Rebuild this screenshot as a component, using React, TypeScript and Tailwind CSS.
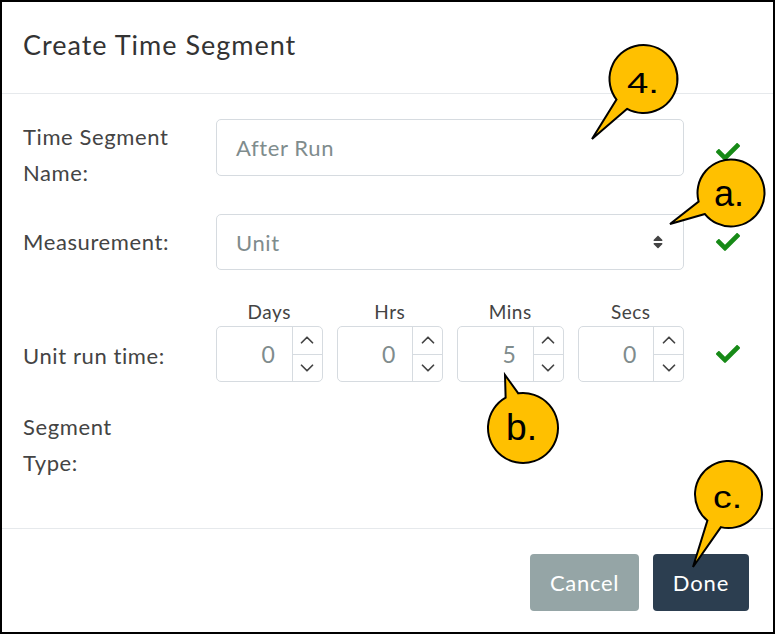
import React from 'react';

const CHECK_PATH =
  'M173.898 439.404l-166.4-166.4c-9.997-9.997-9.997-26.206 0-36.204l36.203-36.204c9.997-9.998 26.207-9.998 36.204 0L192 312.69 432.095 72.596c9.997-9.997 26.207-9.997 36.204 0l36.203 36.204c9.997 9.997 9.997 26.206 0 36.204l-294.4 294.401c-9.998 9.997-26.207 9.997-36.204-.001z';

function Check({ className = '' }: { className?: string }) {
  return (
    <svg viewBox="0 0 512 512" className={`w-[24px] h-[24px] text-[#178a17] ${className}`}>
      <path fill="currentColor" d={CHECK_PATH} />
    </svg>
  );
}

function SortIcon() {
  return (
    <svg viewBox="0 0 320 512" className="w-[10px] h-[16px] text-[#444]">
      <path
        fill="currentColor"
        d="M41 288h238c21.4 0 32.1 25.9 17 41L177 448c-9.4 9.4-24.6 9.4-33.9 0L24 329c-15.1-15.1-4.4-41 17-41zm255-105L177 64c-9.4-9.4-24.6-9.4-33.9 0L24 183c-15.1 15.1-4.4 41 17 41h238c21.4 0 32.1-25.9 17-41z"
      />
    </svg>
  );
}

function Chevron({ up }: { up?: boolean }) {
  return (
    <svg viewBox="0 0 24 24" className="w-[22px] h-[22px]" fill="none" stroke="#444" strokeWidth={1.9} strokeLinecap="round" strokeLinejoin="round">
      <path d={up ? 'M6 15l6-6 6 6' : 'M6 9l6 6 6-6'} />
    </svg>
  );
}

function Spinner({ label, value }: { label: string; value: string }) {
  return (
    <div className="flex flex-col w-[107px]">
      <div className="text-center text-[19px] tracking-[0.5px] leading-[22px] text-[#444] mb-[3px]">{label}</div>
      <div className="flex h-[56px] border border-[#d6dbe0] rounded-[5px] overflow-hidden">
        <div className="flex-1 flex items-center justify-end pr-[16px] text-[23px] text-[#7f8c8d]">{value}</div>
        <div className="w-[30px] border-l border-[#d6dbe0] flex flex-col">
          <div className="flex-1 flex items-center justify-center border-b border-[#d6dbe0]">
            <Chevron up />
          </div>
          <div className="flex-1 flex items-center justify-center">
            <Chevron />
          </div>
        </div>
      </div>
    </div>
  );
}

function calloutPath(cx: number, cy: number, r: number, tx: number, ty: number, half: number) {
  const a = Math.atan2(ty - cy, tx - cx);
  const h = (half * Math.PI) / 180;
  const p1 = [cx + r * Math.cos(a - h), cy + r * Math.sin(a - h)];
  const p2 = [cx + r * Math.cos(a + h), cy + r * Math.sin(a + h)];
  return `M${p1[0]} ${p1[1]} L${tx} ${ty} L${p2[0]} ${p2[1]} A${r} ${r} 0 1 1 ${p1[0]} ${p1[1]} Z`;
}

const callouts = [
  { cx: 643.5, cy: 79, r: 34, tx: 592, ty: 139, half: 12, text: '4.', x: 627, y: 93, size: 30, len: 32 },
  { cx: 731, cy: 193, r: 33.5, tx: 670, ty: 224, half: 12, text: 'a.', x: 714, y: 206, size: 36, len: 30 },
  { cx: 523, cy: 428, r: 35, tx: 505, ty: 375, half: 11, text: 'b.', x: 506, y: 440, size: 37, len: 31 },
  { cx: 728.5, cy: 494.5, r: 33.5, tx: 693, ty: 567, half: 13, text: 'c.', x: 713, y: 508, size: 32, len: 29 },
];

export default function App() {
  return (
    <div className="relative w-[777px] h-[635px] bg-white">
      <div className="w-[775px] h-[634px] border-2 border-black bg-white flex flex-col font-['Lato','Noto_Sans',sans-serif]">
        <div className="h-[92px] shrink-0 border-b border-[#e6e9ec] flex items-center px-[21px] pb-[5px]">
          <h1 className="text-[27px] tracking-[1px] text-[#333]">Create Time Segment</h1>
        </div>

        <div className="flex-1 px-[21px] pt-[25px] text-[22px] tracking-[0.6px] text-[#444]">
          <div className="flex items-start">
            <div className="w-[193px] leading-[36px]">
              Time Segment
              <br />
              Name:
            </div>
            <div className="w-[468px] h-[57px] border border-[#d6dbe0] rounded-[5px] flex items-center px-[19px] text-[#7f8c8d]">
              After Run
            </div>
            <Check className="ml-[32px] mt-[21px]" />
          </div>

          <div className="flex items-center mt-[23px]">
            <div className="w-[193px] leading-[36px]">Measurement:</div>
            <div className="w-[468px] h-[56px] border border-[#d6dbe0] rounded-[5px] flex items-center justify-between pl-[19px] pr-[20px] text-[#7f8c8d]">
              <span>Unit</span>
              <SortIcon />
            </div>
            <Check className="ml-[32px]" />
          </div>

          <div className="flex items-end mt-[31px]">
            <div className="w-[193px] leading-[36px] mb-[8px]">Unit run time:</div>
            <div className="flex gap-[14px] w-[468px]">
              <Spinner label="Days" value="0" />
              <Spinner label="Hrs" value="0" />
              <Spinner label="Mins" value="5" />
              <Spinner label="Secs" value="0" />
            </div>
            <Check className="ml-[32px] mb-[16px]" />
          </div>

          <div className="mt-[27px] leading-[36px]">
            Segment
            <br />
            Type:
          </div>
        </div>

        <div className="h-[104px] shrink-0 border-t border-[#e6e9ec] flex justify-end items-start gap-[14px] pt-[25px] pr-[24px]">
          <button className="w-[109px] h-[57px] rounded-[4px] bg-[#95a5a6] text-white text-[22px] tracking-[0.7px]">Cancel</button>
          <button className="w-[96px] h-[57px] rounded-[4px] bg-[#2c3e50] text-white text-[22px] tracking-[0.9px]">Done</button>
        </div>
      </div>

      <svg className="absolute inset-0 pointer-events-none" width={777} height={635} viewBox="0 0 777 635">
        {callouts.map((c) => (
          <g key={c.text}>
            <path d={calloutPath(c.cx, c.cy, c.r, c.tx, c.ty, c.half)} fill="#FFC000" stroke="#000" strokeWidth={2} strokeLinejoin="miter" />
            <text
              x={c.x}
              y={c.y}
              fontSize={c.size}
              textLength={c.len}
              lengthAdjust="spacingAndGlyphs"
              fontFamily="'Liberation Sans', Arial, sans-serif"
              fill="#000"
            >
              {c.text}
            </text>
          </g>
        ))}
      </svg>
    </div>
  );
}
